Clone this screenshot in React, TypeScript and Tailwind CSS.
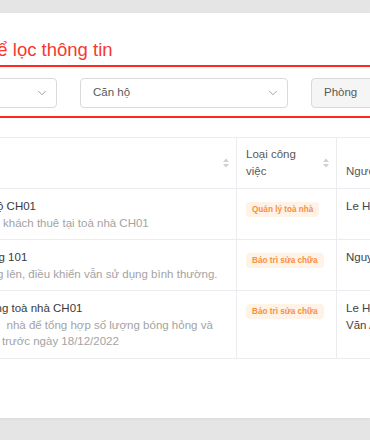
import { ChevronDown } from 'lucide-react'

function SortIcon() {
  return (
    <svg width="6" height="10" viewBox="0 0 6 10" className="shrink-0">
      <path d="M3 0.5 L6 4 L0 4 Z" fill="#cfcfd4" />
      <path d="M3 9.5 L6 6 L0 6 Z" fill="#cfcfd4" />
    </svg>
  )
}

function Select({ label, disabled }: { label?: string; disabled?: boolean }) {
  return (
    <div
      className={`flex h-[30px] w-[208px] shrink-0 items-center justify-between rounded-[4px] border border-[#d9d9d9] pl-[12px] pr-[7px] text-[11.5px] text-[#595959] ${disabled ? 'bg-[#f5f5f5]' : 'bg-white'}`}
    >
      <span>{label}</span>
      {!disabled && <ChevronDown size={14} strokeWidth={1.6} className="text-[#9a9a9a]" />}
    </div>
  )
}

function Badge({ text }: { text: string }) {
  return (
    <span className="inline-block h-[15px] rounded-[4px] bg-[#fff2e6] px-[6px] text-[8.2px] font-bold leading-[15px] text-[#fa8f3e]">
      {text}
    </span>
  )
}

const rows = [
  {
    title: { text: 'ộ CH01', ml: '-ml-[3px]' },
    lines: [{ text: 'khách thuê tại toà nhà CH01', ml: 'ml-[3px]' }],
    type: 'Quản lý toà nhà',
    people: ['Le Hoàng Nam'],
  },
  {
    title: { text: 'g 101', ml: '-ml-[1.5px]' },
    lines: [{ text: 'g lên, điều khiển vẫn sử dụng bình thường.', ml: '-ml-[3px]' }],
    type: 'Báo trì sửa chữa',
    people: ['Nguyễn Văn Bình'],
  },
  {
    title: { text: 'ng toà nhà CH01', ml: '-ml-[4.5px]' },
    lines: [
      { text: 'nhà để tổng hợp số lượng bóng hỏng và', ml: 'ml-[6.5px]' },
      { text: 'trước ngày 18/12/2022', ml: 'ml-[2px]' },
    ],
    type: 'Báo trì sửa chữa',
    people: ['Le Hoàng', 'Văn A'],
  },
]

export default function App() {
  return (
    <div className="h-[440px] w-[370px] overflow-hidden bg-[#e5e5e5] pt-[13px] font-['Liberation_Sans',Arial,sans-serif]">
      <div className="h-[405px] bg-white shadow-[0_1px_3px_rgba(0,0,0,0.06)]">
        <div className="-ml-[200px] w-[800px] pt-[25px]">
          <h2 className="pl-[184px] text-[18.5px] leading-[24px] text-[#f5392f]">Để lọc thông tin</h2>

          <div className="mt-[3px] border-y-2 border-[#ff2a1c] pb-[8px] pt-[11px]">
            <div className="flex gap-[23px] pl-[49px]">
              <Select label="Toà nhà" />
              <Select label="Căn hộ" />
              <Select label="Phòng" disabled />
            </div>
          </div>

          <div className="mt-[19px] grid grid-cols-[437px_100px_263px] border-t border-[#ebebf0] text-[11.5px] leading-[16.5px]">
            <div className="flex h-[51px] items-center justify-end border-b border-r border-[#ebebf0] pr-[7px]">
              <SortIcon />
            </div>
            <div className="flex h-[51px] items-center justify-between border-b border-r border-[#ebebf0] pl-[9px] pr-[7px] text-[#595959]">
              <div className="w-[62px] self-end pb-[9px]">Loại công việc</div>
              <SortIcon />
            </div>
            <div className="flex h-[51px] items-end border-b border-[#ebebf0] pb-[9px] pl-[9px] text-[#595959]">
              Người thực hiện
            </div>

            {rows.map((r, i) => (
              <div key={i} className="contents">
                <div className="whitespace-nowrap border-b border-r border-[#ebebf0] pb-[8px] pl-[200px] pt-[9px]">
                  <div className={`${r.title.ml} text-[#3a3a3a]`}>{r.title.text}</div>
                  {r.lines.map((l, j) => (
                    <div key={j} className={`${l.ml} text-[#a3a3a3]`}>
                      {l.text}
                    </div>
                  ))}
                </div>
                <div className="border-b border-r border-[#ebebf0] pb-[8px] pl-[9px] pt-[10.5px]">
                  <Badge text={r.type} />
                </div>
                <div className="whitespace-nowrap border-b border-[#ebebf0] pb-[8px] pl-[9px] pt-[9px] text-[#444]">
                  {r.people.map((p, j) => (
                    <div key={j}>{p}</div>
                  ))}
                </div>
              </div>
            ))}
          </div>
        </div>
      </div>
    </div>
  )
}
